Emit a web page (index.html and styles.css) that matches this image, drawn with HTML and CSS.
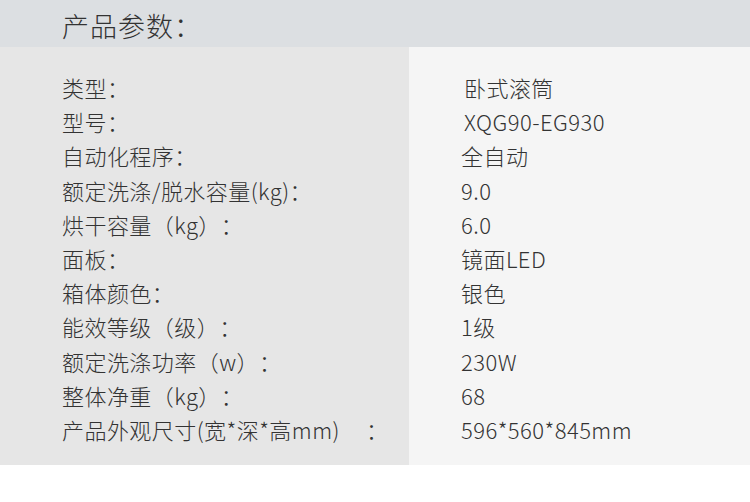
FILE: index.html
```html
<!DOCTYPE html>
<html lang="zh-CN">
<head>
<meta charset="utf-8">
<link rel="stylesheet" href="styles.css">
</head>
<body>
<div class="page">
  <header class="head"><h1 class="title">产品参数：</h1></header>
  <section class="specs">
    <div class="col col-left">
      <div class="row">类型：</div>
      <div class="row">型号：</div>
      <div class="row">自动化程序：</div>
      <div class="row">额定洗涤/脱水容量(kg)：</div>
      <div class="row">烘干容量（kg）：</div>
      <div class="row">面板：</div>
      <div class="row">箱体颜色：</div>
      <div class="row">能效等级（级）：</div>
      <div class="row">额定洗涤功率（w）：</div>
      <div class="row">整体净重（kg）：</div>
      <div class="row">产品外观尺寸(宽*深*高mm)<span class="gap"></span>：</div>
    </div>
    <div class="col col-right">
      <div class="row shift3">卧式滚筒</div>
      <div class="row shift3">XQG90-EG930</div>
      <div class="row">全自动</div>
      <div class="row">9.0</div>
      <div class="row">6.0</div>
      <div class="row">镜面LED</div>
      <div class="row">银色</div>
      <div class="row">1级</div>
      <div class="row">230W</div>
      <div class="row">68</div>
      <div class="row">596*560*845mm</div>
    </div>
  </section>
</div>
</body>
</html>
```
FILE: styles.css
```css
* { box-sizing: border-box; margin: 0; padding: 0; }
html, body { background: #ffffff; }
body {
  width: 750px;
  height: 502px;
  overflow: hidden;
  font-family: "Noto Sans CJK SC", "Noto Sans", sans-serif;
  color: #333333;
  text-spacing-trim: space-all;
}
.head {
  height: 47px;
  background: #dcdfe2;
  display: flex;
  align-items: center;
  padding-left: 62px;
  padding-top: 4px;
}
.title {
  font-size: 27px;
  font-weight: 300;
  line-height: 1;
  letter-spacing: 1px;
  color: #333333;
}
.specs {
  display: grid;
  grid-template-columns: 409px 1fr;
  height: 418px;
}
.col {
  padding-top: 23px;
  display: flex;
  flex-direction: column;
}
.col-left { background: #e6e6e6; padding-left: 62px; }
.col-right { background: #f5f5f5; padding-left: 52px; }
.row {
  font-size: 22px;
  font-weight: 300;
  line-height: 34.2px;
  letter-spacing: 0.45px;
  white-space: nowrap;
}
.gap { display: inline-block; width: 26px; }
.shift3 { padding-left: 3px; }
```
